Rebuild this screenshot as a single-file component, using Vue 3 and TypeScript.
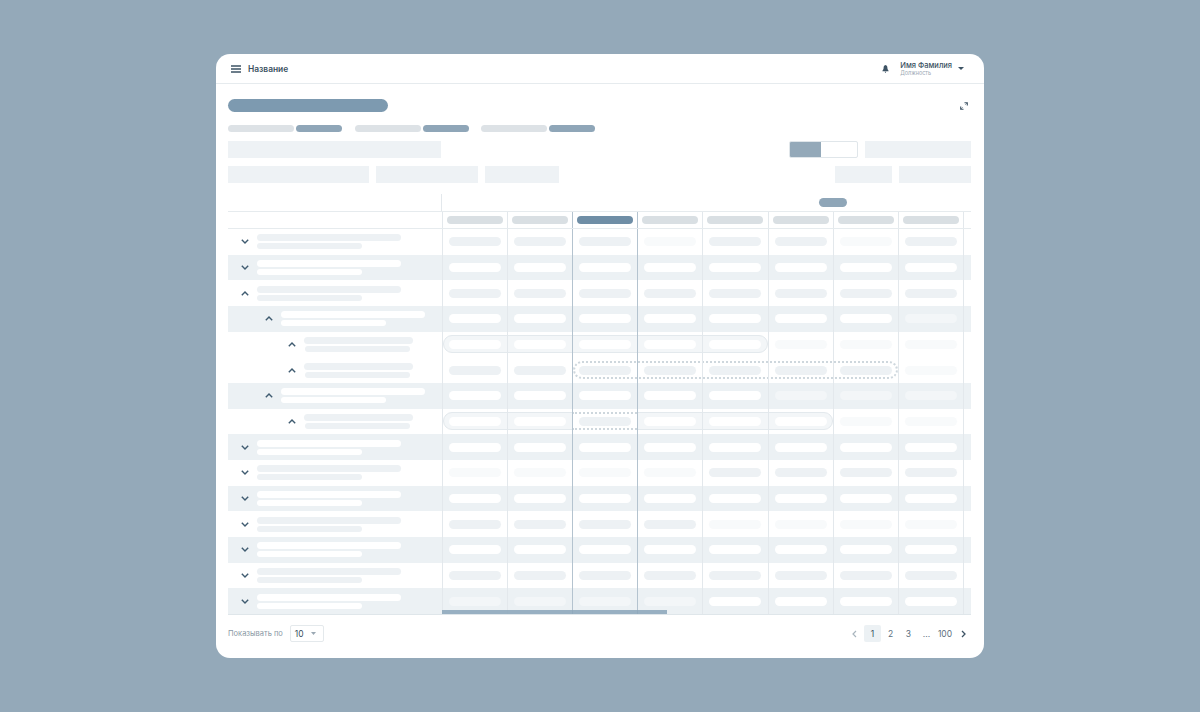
<script setup lang="ts">
type Cell = "n" | "f";

interface Capsule {
  from: number;
  to: number;
  dashed?: boolean;
}

interface Row {
  level: number;
  open: boolean;
  tint: boolean;
  cells: string;
  capsule?: Capsule;
  dashCell?: number;
}

const rows: Row[] = [
  { level: 0, open: false, tint: false, cells: "nnnfnnfn" },
  { level: 0, open: false, tint: true, cells: "nnnnnnnn" },
  { level: 0, open: true, tint: false, cells: "nnnnnnnn" },
  { level: 1, open: true, tint: true, cells: "nnnnnnnf" },
  { level: 2, open: true, tint: false, cells: "nnnnnfff", capsule: { from: 0, to: 5 } },
  { level: 2, open: true, tint: false, cells: "nnnnnnnf", capsule: { from: 2, to: 7, dashed: true } },
  { level: 1, open: true, tint: true, cells: "nnnnnfff" },
  { level: 2, open: true, tint: false, cells: "nnnnnnff", capsule: { from: 0, to: 6 }, dashCell: 2 },
  { level: 0, open: false, tint: true, cells: "nnnnnnnn" },
  { level: 0, open: false, tint: false, cells: "ffffnnnn" },
  { level: 0, open: false, tint: true, cells: "nnnnnnnn" },
  { level: 0, open: false, tint: false, cells: "nnnnffff" },
  { level: 0, open: false, tint: true, cells: "nnnnnnnn" },
  { level: 0, open: false, tint: false, cells: "nnnnnnnn" },
  { level: 0, open: false, tint: true, cells: "ffffnnnn" },
];

const columns = [0, 1, 2, 3, 4, 5, 6, 7];
const chips = [0, 1, 2];
const pages = ["1", "2", "3", "...", "100"];

function cellKind(row: Row, index: number): Cell {
  return row.cells[index] as Cell;
}

function isOnCapsule(row: Row, index: number): boolean {
  const c = row.capsule;
  return !!c && !c.dashed && index >= c.from && index < c.to && row.dashCell !== index;
}
</script>

<template>
  <div class="card">
    <header class="topbar">
      <svg class="burger" width="10" height="8" viewBox="0 0 10 8">
        <path d="M0 1h10M0 4h10M0 7h10" stroke="#3d5364" stroke-width="1.3" />
      </svg>
      <span class="app-name">Название</span>
      <svg class="bell" width="7" height="8" viewBox="0 0 7 8">
        <path d="M3.5 0C2 .4 1.6 1.6 1.6 3c0 1.2-.6 2-1.2 2.7v.5h6.2v-.5C6 5 5.4 4.200 5.400 3c0-1.400-.4-2.600-1.900-3zM2.600 6.800h1.800L3.500 8z" fill="#3d5364" />
      </svg>
      <div class="user">
        <span class="user-name">Имя Фамилия</span>
        <span class="user-role">Должность</span>
      </div>
      <svg class="caret" width="6" height="3" viewBox="0 0 6 3">
        <path d="M0 0h6L3 3z" fill="#3d5364" />
      </svg>
    </header>

    <main class="content">
      <div class="title-row">
        <div class="title-bar"></div>
        <svg width="8" height="8" viewBox="0 0 8 8" fill="none">
          <path d="M4.500.7h2.800v2.800M3.500 7.300H.7V4.500" stroke="#3d5364" stroke-width="1.100" />
          <path d="M6.800 1.200 5.400 2.600M1.200 6.800l1.400-1.400" stroke="#3d5364" stroke-width="0.800" />
        </svg>
      </div>

      <div class="chips">
        <div v-for="c in chips" :key="c" class="chip-pair">
          <span class="chip chip-gray"></span>
          <span class="chip chip-blue"></span>
        </div>
      </div>

      <div class="filters first">
        <div class="box w-213"></div>
        <div class="toggle"><span class="toggle-on"></span></div>
        <div class="box w-106"></div>
      </div>

      <div class="filters second">
        <div class="box w-141"></div>
        <div class="box w-102"></div>
        <div class="box w-74"></div>
        <div class="box w-57 push"></div>
        <div class="box w-72"></div>
      </div>

      <section class="table">
        <div class="thead-top">
          <div class="top-left"></div>
          <div class="top-group"><span class="group-pill"></span></div>
        </div>
        <div class="thead-cols">
          <div></div>
          <div
            v-for="i in columns"
            :key="i"
            class="head-cell"
            :class="{ strong: i === 2 || i === 3 }"
          >
            <span class="head-pill" :class="{ active: i === 2 }"></span>
          </div>
          <div class="head-cell"></div>
        </div>

        <div class="tbody">
          <div
            v-for="(row, r) in rows"
            :key="r"
            class="row"
            :class="{ tint: row.tint }"
          >
            <div class="name-cell" :class="`level-${row.level}`">
              <svg class="chevron" width="8" height="5" viewBox="0 0 8 5" fill="none">
                <path
                  :d="row.open ? 'M.8 4.200 4 1l3.200 3.200' : 'M.8.8 4 4 7.200.8'"
                  stroke="#3f5b70"
                  stroke-width="1.400"
                />
              </svg>
              <div class="names">
                <span class="name-line"></span>
                <span class="name-line short"></span>
              </div>
            </div>

            <div
              v-if="row.capsule"
              class="capsule"
              :class="{ dashed: row.capsule.dashed }"
              :style="{ gridColumn: `${row.capsule.from + 2} / ${row.capsule.to + 2}` }"
            ></div>
            <div
              v-if="row.dashCell !== undefined"
              class="dash-cell"
              :style="{ gridColumn: row.dashCell + 2 }"
            ></div>

            <div
              v-for="i in columns"
              :key="i"
              class="cell"
              :class="{ strong: i === 2 || i === 3 }"
              :style="{ gridColumn: i + 2 }"
            >
              <span
                class="pill"
                :class="[cellKind(row, i) === 'f' ? 'faint' : 'normal', { light: isOnCapsule(row, i) }]"
              ></span>
            </div>
            <div class="cell" :style="{ gridColumn: 10 }"></div>
          </div>
          <div class="scrollbar"></div>
        </div>
      </section>

      <footer class="pager">
        <span class="per-page">Показывать по</span>
        <div class="select">
          <span>10</span>
          <svg width="5" height="3" viewBox="0 0 5 3"><path d="M0 0h5L2.500 3z" fill="#9aa8b3" /></svg>
        </div>
        <nav class="pages">
          <svg width="5" height="8" viewBox="0 0 5 8" fill="none">
            <path d="M4 1 1 4l3 3" stroke="#a9b5be" stroke-width="1.200" />
          </svg>
          <span v-for="(p, i) in pages" :key="p" class="page" :class="{ current: i === 0 }">{{ p }}</span>
          <svg width="5" height="8" viewBox="0 0 5 8" fill="none">
            <path d="m1 1 3 3-3 3" stroke="#3d5364" stroke-width="1.300" />
          </svg>
        </nav>
      </footer>
    </main>
  </div>
</template>

<style>
body {
  background: #94a9b9;
}
</style>

<style scoped>
.card {
  box-sizing: border-box;
  width: 768px;
  height: 604px;
  margin: 54px 0 54px 216px;
  background: #fff;
  border-radius: 14px;
  overflow: hidden;
  font-family: Inter, "Liberation Sans", sans-serif;
}

.topbar {
  display: flex;
  align-items: center;
  box-sizing: border-box;
  height: 30px;
  padding: 0 20px 0 15px;
  border-bottom: 1px solid #e6ebee;
}

.app-name {
  margin-left: 7px;
  font-size: 8.400px;
  font-weight: 600;
  color: #3a5061;
}

.bell {
  margin-left: auto;
}

.user {
  display: flex;
  flex-direction: column;
  margin-left: 11.500px;
}

.user-name {
  font-size: 7.500px;
  font-weight: 500;
  line-height: 9px;
  color: #3a5061;
}

.user-role {
  font-size: 5.500px;
  line-height: 7px;
  color: #9aa8b3;
}

.caret {
  margin-left: 6px;
}

.content {
  display: flex;
  flex-direction: column;
  padding: 0 13px 0 12px;
}

.title-row {
  display: flex;
  align-items: center;
  justify-content: space-between;
  margin-top: 15px;
  padding-right: 3.500px;
  height: 13px;
}

.title-bar {
  width: 160px;
  height: 13px;
  border-radius: 7px;
  background: #7d9ab0;
}

.chips {
  display: flex;
  gap: 12.700px;
  margin-top: 13px;
}

.chip-pair {
  display: flex;
  gap: 2px;
}

.chip {
  height: 7px;
  border-radius: 4px;
}

.chip-gray {
  width: 66px;
  background: #dde2e6;
}

.chip-blue {
  width: 46px;
  background: #8fa6b8;
}

.filters {
  display: flex;
  height: 17px;
}

.filters.first {
  margin-top: 9px;
}

.filters.second {
  margin-top: 8px;
  gap: 7px;
}

.box {
  background: #eef2f5;
}

.w-213 { width: 213px; }
.w-106 { width: 106px; margin-left: 7px; }
.w-141 { width: 141px; }
.w-102 { width: 102px; }
.w-74 { width: 74px; }
.w-57 { width: 57px; }
.w-72 { width: 72px; }

.push {
  margin-left: auto;
}

.toggle {
  box-sizing: border-box;
  width: 69px;
  margin-left: auto;
  border: 1px solid #e0e6ea;
  border-radius: 2px;
  overflow: hidden;
}

.toggle-on {
  display: block;
  width: 31px;
  height: 100%;
  background: #94a9b9;
}

.table {
  margin-top: 11px;
  width: 743px;
}

.thead-top,
.thead-cols,
.row {
  display: grid;
  grid-template-columns: 213.800px repeat(8, 65.150px) 1fr;
}

.thead-top {
  height: 18px;
  border-bottom: 1px solid #e6ebee;
  box-sizing: border-box;
}

.top-left {
  border-right: 1px solid #e3e8ec;
  grid-column: 1;
}

.top-group {
  grid-column: 6 / 10;
  display: flex;
  justify-content: center;
  align-items: center;
}

.group-pill {
  width: 28px;
  height: 9px;
  border-radius: 5px;
  background: #8fa6b8;
}

.thead-cols {
  box-sizing: border-box;
  height: 17px;
  border-bottom: 1px solid #e6ebee;
}

.head-cell {
  display: flex;
  align-items: center;
  justify-content: center;
  border-left: 1px solid #e3e8ec;
}

.head-pill {
  width: 56px;
  height: 8px;
  border-radius: 4px;
  background: #d9dfe3;
}

.head-pill.active {
  background: #6f8ea6;
}

.tbody {
  position: relative;
  display: grid;
  grid-template-rows: repeat(15, 1fr);
  height: 386px;
  border-bottom: 1px solid #dfe6ea;
  box-sizing: border-box;
}

.row.tint {
  background: #ecf1f4;
}

.name-cell {
  display: flex;
  align-items: center;
  grid-column: 1;
  grid-row: 1;
}

.level-0 { padding-left: 13px; }
.level-1 { padding-left: 37px; }
.level-2 { padding-left: 60px; }

.names {
  display: flex;
  flex-direction: column;
  gap: 2px;
  margin-left: 8px;
}

.chevron {
  flex: none;
}

.name-line {
  display: block;
  width: 144px;
  height: 7px;
  border-radius: 4px;
  background: #edf1f4;
}

.name-line.short {
  width: 105px;
  height: 6px;
}

.tint .name-line {
  background: #fff;
}

.level-2 .name-line {
  width: 109px;
}

.level-2 .name-line.short {
  width: 105px;
  margin-left: 1px;
}

.capsule {
  grid-row: 1;
  align-self: center;
  box-sizing: border-box;
  height: 18px;
  margin: 0 0 0 1px;
  border: 1.500px solid #e3e9ed;
  border-radius: 9px;
  background: #f3f6f8;
}

.capsule.dashed {
  border: 2px dotted #ced7dd;
  background: #fff;
}

.dash-cell {
  grid-row: 1;
  align-self: center;
  box-sizing: border-box;
  height: 18px;
  border-top: 2px dotted #ced7dd;
  border-bottom: 2px dotted #ced7dd;
  background: #fff;
}

.cell {
  grid-row: 1;
  display: flex;
  align-items: center;
  justify-content: center;
  border-left: 1px solid #e3e8ec;
}

.cell.strong,
.head-cell.strong {
  border-left-color: #b4c3cf;
}

.pill {
  width: 52px;
  height: 9px;
  border-radius: 5px;
}

.pill.normal {
  background: #edf1f4;
}

.pill.faint {
  background: #f8fafb;
}

.pill.light {
  background: #fff;
}

.tint .pill.normal {
  background: #fff;
}

.tint .pill.faint {
  background: #f3f6f8;
}

.scrollbar {
  position: absolute;
  left: 213.800px;
  bottom: 0;
  width: 225px;
  height: 4px;
  background: #8aa5b9;
  opacity: 0.85;
}

.pager {
  display: flex;
  align-items: center;
  height: 17px;
  margin-top: 10px;
  font-size: 8.500px;
  color: #8a98a4;
}

.per-page {
  font-size: 7.500px;
}

.select {
  display: flex;
  align-items: center;
  justify-content: space-between;
  box-sizing: border-box;
  width: 34px;
  height: 17px;
  margin-left: 7px;
  padding: 0 7px 0 4px;
  border: 1px solid #e4e9ec;
  border-radius: 2px;
  color: #3a5061;
}

.pages {
  display: flex;
  align-items: center;
  margin-left: auto;
  margin-right: 5px;
  gap: 1px;
}

.page {
  display: flex;
  align-items: center;
  justify-content: center;
  min-width: 17px;
  height: 17px;
  color: #5d7080;
}

.page.current {
  margin-left: 6px;
  background: #ecf1f4;
  border-radius: 2px;
  color: #3a5061;
}

.page:last-of-type {
  margin-right: 6px;
  min-width: 18px;
}
</style>
